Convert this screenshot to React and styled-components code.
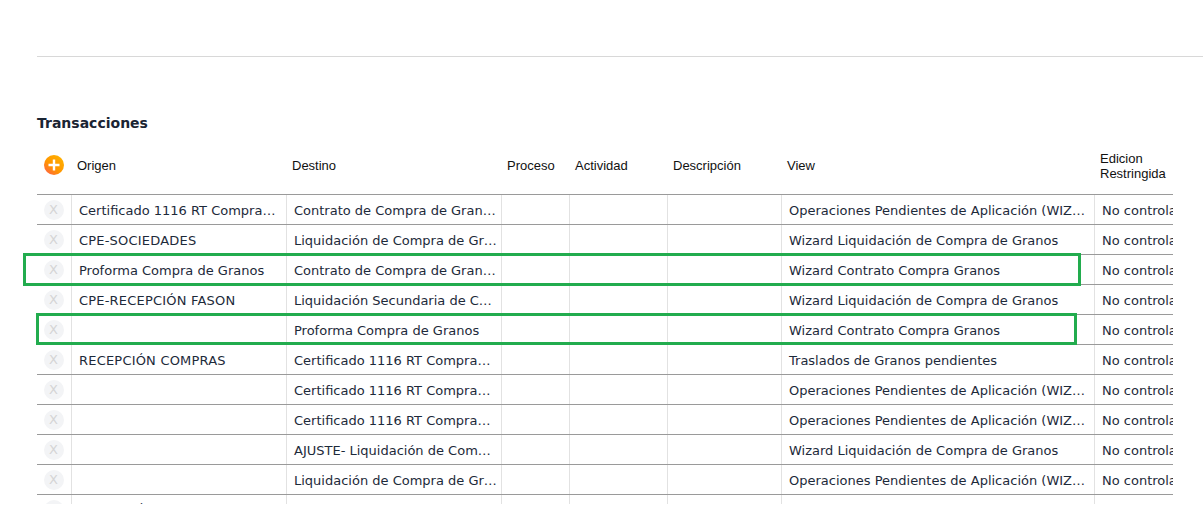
import React from 'react'
import styled, { createGlobalStyle } from 'styled-components'

const GlobalStyle = createGlobalStyle`
  html, body {
    margin: 0;
    padding: 0;
    background: #fff;
    overflow: hidden;
  }
`

const Page = styled.div`
  position: relative;
  width: 1203px;
  height: 529px;
  padding: 56px 30px 0 37px;
  box-sizing: border-box;
  font-family: 'DejaVu Sans', Verdana, sans-serif;
`

const Rule = styled.div`
  height: 1px;
  margin-right: -30px;
  background: #d8d8d8;
`

const Title = styled.h2`
  margin: 58px 0 0;
  height: 16px;
  font-size: 14px;
  line-height: 16px;
  font-weight: 700;
  color: #1a2433;
`

const Table = styled.div`
  margin-top: 12px;
  height: 361px;
  overflow: hidden;
`

const HeadRow = styled.div`
  display: flex;
  align-items: center;
  height: 44px;
  padding-bottom: 7px;
  border-bottom: 1px solid #9a9a9a;
  box-sizing: content-box;
`

const HeadCell = styled.div`
  width: ${props => props.$w}px;
  flex: none;
  padding-left: ${props => props.$pad || 0}px;
  padding-top: ${props => props.$top || 0}px;
  box-sizing: border-box;
  font-family: 'Liberation Sans', Arial, sans-serif;
  font-size: 13px;
  line-height: 15px;
  color: #111;
`

const Row = styled.div`
  display: flex;
  height: 29px;
  border-bottom: 1px solid #9a9a9a;
`

const Cell = styled.div`
  width: ${props => props.$w}px;
  flex: none;
  box-sizing: border-box;
  padding-left: 7px;
  border-right: ${props => (props.$last ? 'none' : '1px solid #e2e2e2')};
  font-size: 13px;
  line-height: 31px;
  letter-spacing: ${props => (props.$caps ? '0.2px' : '0')};
  color: #1d2a3a;
  white-space: nowrap;
  overflow: hidden;
`

const IconCell = styled.div`
  width: 35px;
  flex: none;
  box-sizing: border-box;
  display: flex;
  align-items: center;
  justify-content: center;
  padding: 1px 1px 0 0;
  border-right: 1px solid #e2e2e2;
`

const Remove = styled.span`
  width: 20px;
  height: 20px;
  border-radius: 50%;
  background: #f3f4f6;
  color: #d5d5d5;
  font-size: 13px;
  line-height: 20px;
  text-align: center;
`

const AddIcon = styled.svg`
  display: block;
  margin-left: 7px;
`

const Highlight = styled.div`
  position: absolute;
  left: ${props => props.$left}px;
  top: ${props => props.$top}px;
  width: ${props => props.$width}px;
  height: ${props => props.$height}px;
  box-sizing: border-box;
  border: 3px solid #22ac4e;
  pointer-events: none;
`

const widths = [35, 215, 215, 68, 98, 114, 313, 79]

const pendientes = 'Operaciones Pendientes de Aplicación (WIZ…'
const wizardLiq = 'Wizard Liquidación de Compra de Granos'
const wizardCon = 'Wizard Contrato Compra Granos'
const cert = 'Certificado 1116 RT Compra…'

const rows = [
  ['Certificado 1116 RT Compra…', 'Contrato de Compra de Gran…', pendientes],
  ['CPE-SOCIEDADES', 'Liquidación de Compra de Gr…', wizardLiq],
  ['Proforma Compra de Granos', 'Contrato de Compra de Gran…', wizardCon],
  ['CPE-RECEPCIÓN FASON', 'Liquidación Secundaria de C…', wizardLiq],
  ['', 'Proforma Compra de Granos', wizardCon],
  ['RECEPCIÓN COMPRAS', cert, 'Traslados de Granos pendientes'],
  ['', cert, pendientes],
  ['', cert, pendientes],
  ['', 'AJUSTE- Liquidación de Com…', wizardLiq],
  ['', 'Liquidación de Compra de Gr…', pendientes],
  ['RECEPCIÓN COMPRAS', cert, 'Traslados de Granos pendientes'],
]

const PlusIcon = () => (
  <AddIcon width="20" height="20" viewBox="0 0 20 20">
    <defs>
      <linearGradient id="addFill" x1="0.85" y1="0.1" x2="0.15" y2="0.9">
        <stop offset="0" stopColor="#ffb000" />
        <stop offset="0.6" stopColor="#ff9500" />
        <stop offset="1" stopColor="#ff6a3a" />
      </linearGradient>
    </defs>
    <circle cx="10" cy="10" r="10" fill="url(#addFill)" />
    <path d="M10 4.5v11M4.5 10h11" stroke="#fff" strokeWidth="2.4" />
  </AddIcon>
)

const isCaps = text => text !== '' && text === text.toUpperCase()

const App = () => (
  <Page>
    <GlobalStyle />
    <Rule />
    <Title>Transacciones</Title>
    <Table>
      <HeadRow>
        <HeadCell $w={widths[0]}><PlusIcon /></HeadCell>
        <HeadCell $w={widths[1]} $pad={5}>Origen</HeadCell>
        <HeadCell $w={widths[2]} $pad={5}>Destino</HeadCell>
        <HeadCell $w={widths[3]} $pad={5}>Proceso</HeadCell>
        <HeadCell $w={widths[4]} $pad={5}>Actividad</HeadCell>
        <HeadCell $w={widths[5]} $pad={5}>Descripción</HeadCell>
        <HeadCell $w={widths[6]} $pad={5}>View</HeadCell>
        <HeadCell $w={widths[7]} $pad={5} $top={2}>Edicion Restringida</HeadCell>
      </HeadRow>
      {rows.map((row, id) => (
        <Row key={id}>
          <IconCell><Remove>X</Remove></IconCell>
          <Cell $w={widths[1]} $caps={isCaps(row[0])}>{row[0]}</Cell>
          <Cell $w={widths[2]}>{row[1]}</Cell>
          <Cell $w={widths[3]} />
          <Cell $w={widths[4]} />
          <Cell $w={widths[5]} />
          <Cell $w={widths[6]}>{row[2]}</Cell>
          <Cell $w={widths[7]} $last>No controla</Cell>
        </Row>
      ))}
    </Table>
    <Highlight $left={23} $top={253} $width={1058} $height={33} />
    <Highlight $left={36} $top={313} $width={1041} $height={32} />
  </Page>
)

export default App
